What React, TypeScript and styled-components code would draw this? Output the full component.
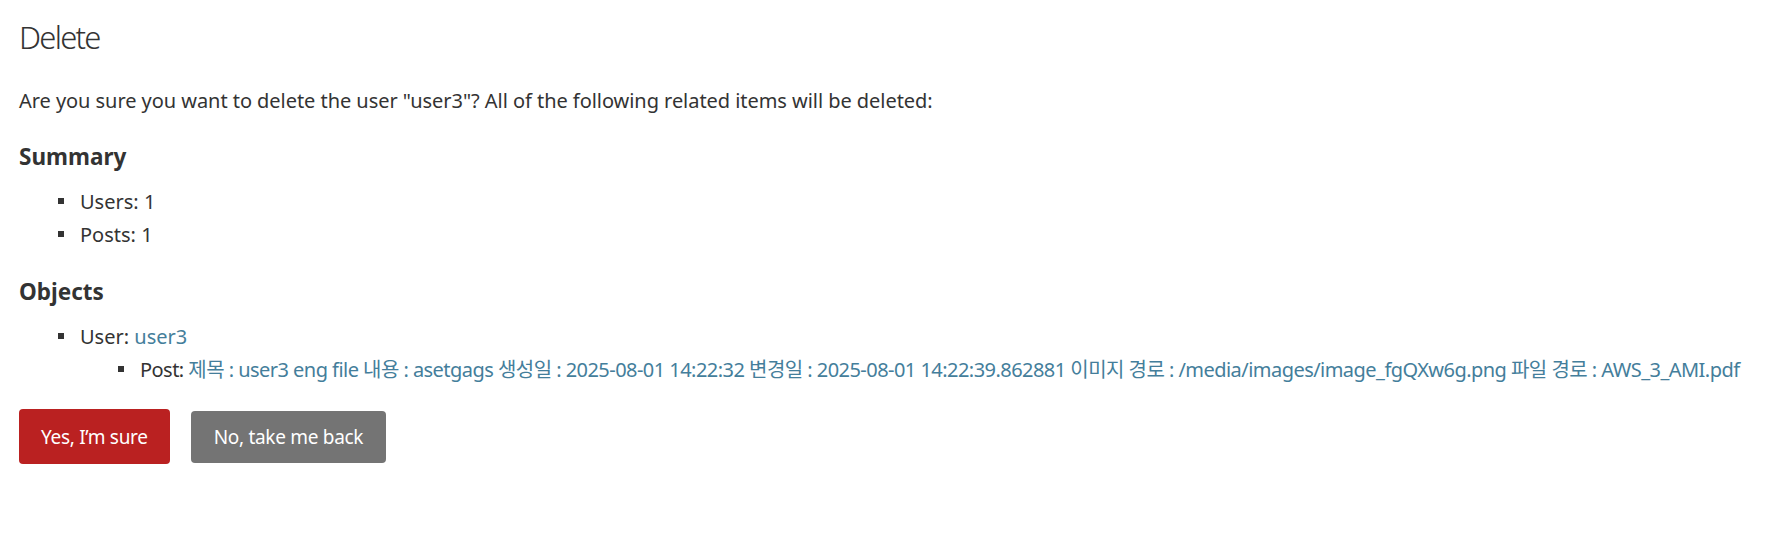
import React from "react";
import styled, { createGlobalStyle } from "styled-components";

const FONT = `"Noto Sans", "Noto Sans CJK KR", sans-serif`;

const GlobalStyle = createGlobalStyle`
  html, body {
    margin: 0;
    padding: 0;
    background: #fff;
  }
  body {
    font-family: ${FONT};
    color: #333;
  }
`;

const Page = styled.main`
  padding: 17px 19px 40px;
`;

const Title = styled.h1`
  margin: 0 0 30px;
  font-size: 31px;
  line-height: 40px;
  font-weight: 300;
  letter-spacing: -1.75px;
  color: #333;
`;

const Lead = styled.p`
  margin: 0 0 27px;
  font-size: 20px;
  line-height: 28px;
  letter-spacing: -0.05px;
`;

const SectionTitle = styled.h2<{ $gap?: number }>`
  margin: ${(p) => p.$gap ?? 0}px 0 13px;
  font-size: 22.5px;
  line-height: 30px;
  font-weight: 700;
`;

const List = styled.ul<{ $indent: number }>`
  list-style: none;
  margin: 0;
  padding: 0 0 0 ${(p) => p.$indent}px;
`;

const Item = styled.li<{ $tight?: boolean }>`
  font-size: 20px;
  line-height: 33px;
  white-space: nowrap;
  letter-spacing: ${(p) => (p.$tight ? "-0.54px" : "0")};
  &::before {
    content: "";
    display: inline-block;
    width: 6px;
    height: 6px;
    background: #333;
    margin-right: 16px;
    vertical-align: 5px;
  }
`;

const Link = styled.a`
  color: #447e9b;
  text-decoration: none;
`;

const Actions = styled.div`
  display: flex;
  align-items: center;
  gap: 21px;
  margin-top: 23px;
`;

const Button = styled.button<{ $variant: "danger" | "cancel" }>`
  box-sizing: border-box;
  height: ${(p) => (p.$variant === "danger" ? 55 : 52)}px;
  padding: 0 ${(p) => (p.$variant === "danger" ? 22 : 23)}px;
  border: none;
  border-radius: 4px;
  font-family: ${FONT};
  font-size: 19px;
  letter-spacing: -0.3px;
  color: #fff;
  background: ${(p) => (p.$variant === "danger" ? "#ba2121" : "#747474")};
  cursor: pointer;
`;

export default function App() {
  return (
    <>
      <GlobalStyle />
      <Page>
        <Title>Delete</Title>
        <Lead>
          Are you sure you want to delete the user "user3"? All of the following related items will be deleted:
        </Lead>
        <SectionTitle>Summary</SectionTitle>
        <List $indent={39}>
          <Item>Users: 1</Item>
          <Item>Posts: 1</Item>
        </List>
        <SectionTitle $gap={26}>Objects</SectionTitle>
        <List $indent={39}>
          <Item>
            User: <Link href="#">user3</Link>
            <List $indent={60}>
              <Item $tight>
                Post:{" "}
                <Link href="#">
                  제목 : user3 eng file 내용 : asetgags 생성일 : 2025-08-01 14:22:32 변경일 : 2025-08-01 14:22:39.862881 이미지 경로 : /media/images/image_fgQXw6g.png 파일 경로 : AWS_3_AMI.pdf
                </Link>
              </Item>
            </List>
          </Item>
        </List>
        <Actions>
          <Button $variant="danger">Yes, I’m sure</Button>
          <Button $variant="cancel">No, take me back</Button>
        </Actions>
      </Page>
    </>
  );
}
